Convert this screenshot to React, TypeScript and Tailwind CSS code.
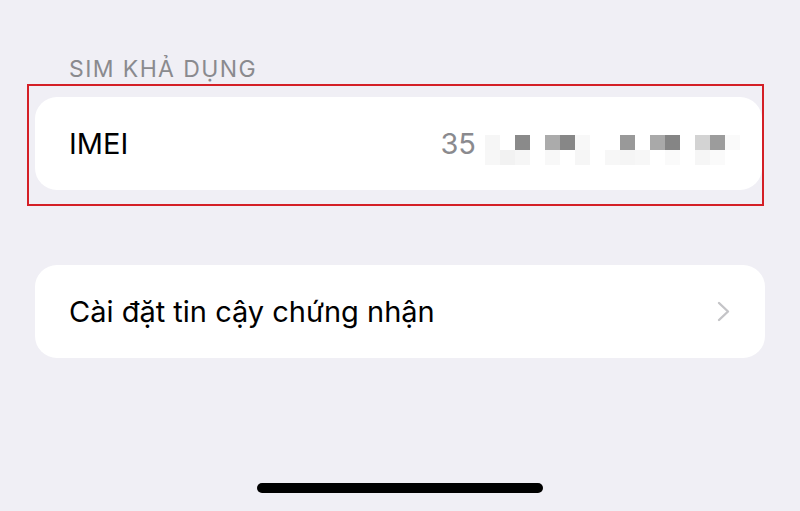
const row1 = [
  "bg-[#f6f6f6]",
  "bg-white",
  "bg-[#8a8a8a]",
  "bg-white",
  "bg-[#ababab]",
  "bg-[#878787]",
  "bg-[#f8f8f8]",
  "bg-white",
  "bg-white",
  "bg-[#999999]",
  "bg-white",
  "bg-[#a9a9a9]",
  "bg-[#858585]",
  "bg-white",
  "bg-[#d3d3d3]",
  "bg-[#9c9c9c]",
  "bg-[#fafafa]",
]

const row2 = [
  "bg-[#f7f7f7]",
  "bg-[#f2f2f2]",
  "bg-[#f6f6f6]",
  "bg-white",
  "bg-[#f8f8f8]",
  "bg-white",
  "bg-[#f6f6f6]",
  "bg-white",
  "bg-[#f7f7f7]",
  "bg-[#f5f5f5]",
  "bg-[#f7f7f7]",
  "bg-white",
  "bg-[#fafafa]",
  "bg-white",
  "bg-[#f6f6f6]",
  "bg-[#fafafa]",
  "bg-white",
]

function Blurred() {
  return (
    <div className="flex flex-col mt-[13px]">
      <div className="flex">
        {row1.map((c, i) => (
          <div key={i} className={`w-[15px] h-[15px] ${c}`} />
        ))}
      </div>
      <div className="flex">
        {row2.map((c, i) => (
          <div key={i} className={`w-[15px] h-[15px] ${c}`} />
        ))}
      </div>
    </div>
  )
}

export default function App() {
  return (
    <div className="w-[800px] h-[511px] bg-[#f0eff5] flex flex-col overflow-hidden font-['Inter','Noto_Sans',sans-serif]">
      <div className="pt-[55px] pl-[69px] text-[23px] leading-[28px] text-[#8a8a8e] tracking-[1.4px]">
        SIM KHẢ DỤNG
      </div>

      <div className="mt-[1px] ml-[27px] w-[737px] border-2 border-[#d41f26] pt-[11px] pb-[14px] pl-[6px]">
        <div className="h-[93px] w-[727px] bg-white rounded-[22px] flex items-center justify-between pl-[34px] pr-[22px]">
          <span className="text-[29px] text-black">IMEI</span>
          <div className="flex items-center gap-[9px]">
            <span className="text-[29px] text-[#8a8a8e]">35</span>
            <Blurred />
          </div>
        </div>
      </div>

      <div className="mt-[59px] ml-[35px] w-[730px] h-[93px] bg-white rounded-[22px] flex items-center justify-between pl-[34px] pr-[35px]">
        <span className="text-[29px] text-black">Cài đặt tin cậy chứng nhận</span>
        <svg width="13" height="21" viewBox="0 0 13 21" fill="none">
          <path d="M2 2 L11 10.5 L2 19" stroke="#c4c4c7" strokeWidth="2.4" strokeLinecap="round" strokeLinejoin="round" />
        </svg>
      </div>

      <div className="mt-auto mb-[18px] mx-auto w-[286px] h-[10px] rounded-full bg-black" />
    </div>
  )
}
